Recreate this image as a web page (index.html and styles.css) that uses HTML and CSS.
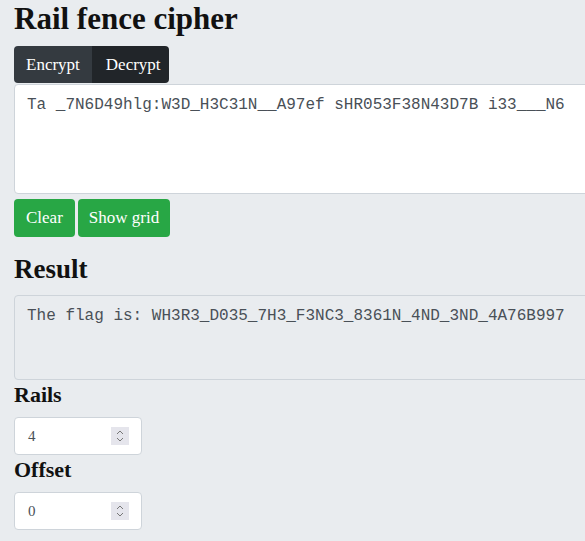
FILE: index.html
```
<!DOCTYPE html>
<html>
<head>
<meta charset="utf-8">
<link rel="stylesheet" href="styles.css">
</head>
<body>
<div class="page">
  <h1 class="title">Rail fence cipher</h1>
  <div class="tabs">
    <button class="tab tab-encrypt">Encrypt</button>
    <button class="tab tab-active">Decrypt</button>
  </div>
  <textarea class="input-area" spellcheck="false">Ta _7N6D49hlg:W3D_H3C31N__A97ef sHR053F38N43D7B i33___N6</textarea>
  <div class="actions">
    <button class="btn btn-clear">Clear</button>
    <button class="btn">Show grid</button>
  </div>
  <h2 class="section">Result</h2>
  <div class="result">The flag is: WH3R3_D035_7H3_F3NC3_8361N_4ND_3ND_4A76B997</div>
  <h3 class="label">Rails</h3>
  <div class="num">
    <span class="num-value">4</span>
    <span class="spin"><svg width="10" height="16" viewBox="0 0 10 16"><path d="M2 6 L5 3 L8 6 M2 10 L5 13 L8 10" fill="none" stroke="#777" stroke-width="1"/></svg></span>
  </div>
  <h3 class="label">Offset</h3>
  <div class="num">
    <span class="num-value">0</span>
    <span class="spin"><svg width="10" height="16" viewBox="0 0 10 16"><path d="M2 6 L5 3 L8 6 M2 10 L5 13 L8 10" fill="none" stroke="#777" stroke-width="1"/></svg></span>
  </div>
</div>
</body>
</html>
```
FILE: styles.css
```
html, body {
  margin: 0;
  padding: 0;
  background: #e9ecef;
  overflow: hidden;
}
.page {
  box-sizing: border-box;
  padding: 0 0 0 14px;
  width: 585px;
  height: 541px;
  overflow: hidden;
  font-family: "Liberation Serif", serif;
  color: #111;
}
.title {
  font-size: 31px;
  font-weight: bold;
  line-height: 38px;
  margin: 0;
  height: 46px;
}
.tabs {
  display: flex;
  width: 155px;
  border-radius: 4px;
  overflow: hidden;
  height: 37px;
}
.tab {
  border: 0;
  margin: 0;
  background: #343a40;
  color: #fff;
  font-family: "Liberation Serif", serif;
  font-size: 17px;
  padding: 0 14px;
  height: 37px;
}
.tab-encrypt {
  padding: 0 12px;
}
.tab-active {
  background: #212529;
}
.input-area {
  display: block;
  box-sizing: border-box;
  width: calc(100% + 40px);
  height: 110px;
  margin: 1px 0 0 0;
  padding: 8px 12px;
  border: 1px solid #ced4da;
  border-radius: 4px;
  background: #fff;
  font-family: "Liberation Mono", monospace;
  font-size: 16px;
  line-height: 24px;
  color: #495057;
  resize: none;
  outline: none;
}
.actions {
  display: flex;
  gap: 3px;
  margin-top: 5px;
}
.btn {
  border: 0;
  background: #28a745;
  color: #fff;
  font-family: "Liberation Serif", serif;
  font-size: 17px;
  height: 38px;
  padding: 0 11px;
  border-radius: 4px;
}
.btn-clear {
  padding: 0 12px;
}
.section {
  font-size: 27px;
  font-weight: bold;
  margin: 0;
  line-height: 32px;
  padding-top: 16px;
  height: 42px;
}
.result {
  box-sizing: border-box;
  width: calc(100% + 40px);
  height: 85px;
  padding: 8px 12px;
  border: 1px solid #ced4da;
  border-radius: 4px;
  background: #e9ecef;
  font-family: "Liberation Mono", monospace;
  font-size: 16px;
  line-height: 24px;
  color: #495057;
}
.label {
  font-size: 22px;
  font-weight: bold;
  margin: 0;
  line-height: 28px;
  padding-top: 1px;
  height: 37px;
}
.num {
  box-sizing: border-box;
  width: 128px;
  height: 38px;
  border: 1px solid #ced4da;
  border-radius: 4px;
  background: #fff;
  display: flex;
  align-items: center;
  justify-content: space-between;
  padding: 0 12px 0 13px;
  font-family: "Liberation Serif", serif;
  font-size: 15px;
  color: #495057;
}
.label + .num {
  margin-top: -1px;
}
.spin {
  width: 18px;
  height: 18px;
  background: #e5e5ec;
  display: flex;
  align-items: center;
  justify-content: center;
}
```
